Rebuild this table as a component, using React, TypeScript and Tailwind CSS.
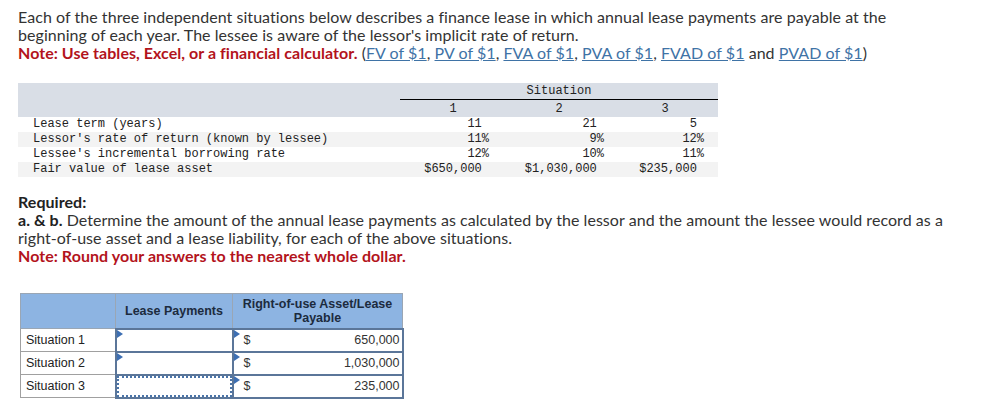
import React from 'react';

const rows = [
  { label: 'Lease term (years)', vals: ['11', '21', '5'], pct: false },
  { label: "Lessor's rate of return (known by lessee)", vals: ['11', '9', '12'], pct: true },
  { label: "Lessee's incremental borrowing rate", vals: ['12', '10', '11'], pct: true },
  { label: 'Fair value of lease asset', vals: ['$650,000', '$1,030,000', '$235,000'], pct: false },
];

const colPad = ['pr-[17px]', 'pr-[8px]', 'pr-[14px]'];

const links = ['FV of $1', 'PV of $1', 'FVA of $1', 'PVA of $1'];

const Flag = () => (
  <span className="absolute left-0 top-0 w-0 h-0 border-y-[4px] border-y-transparent border-l-[6px] border-l-[#3d6fb3]"></span>
);

const answers = [
  { name: 'Situation 1', value: '650,000' },
  { name: 'Situation 2', value: '1,030,000' },
  { name: 'Situation 3', value: '235,000' },
];

const App = () => {
  return (
    <div className="w-[989px] h-[411px] bg-white pl-[18px] pt-[8px] text-[#333] font-['Lato',sans-serif] text-[16px] leading-[18px] tracking-[0.05px]">
      {/* Intro */}
      <p className="whitespace-nowrap">
        Each of the three independent situations below describes a finance lease in which annual lease payments are payable at the
        <br />
        beginning of each year. The lessee is aware of the lessor's implicit rate of return.
        <br />
        <span className="font-bold text-[#b3131c]">Note: Use tables, Excel, or a financial calculator.</span>{' '}
        <span>(</span>
        {links.map((l) => (
          <React.Fragment key={l}>
            <a className="text-[#3f73a6] underline">{l}</a>
            <span>, </span>
          </React.Fragment>
        ))}
        <a className="text-[#3f73a6] underline">FVAD of $1</a>
        <span> and </span>
        <a className="text-[#3f73a6] underline">PVAD of $1</a>
        <span>)</span>
      </p>

      {/* Data table */}
      <table className="mt-[21px] w-[700px] border-collapse table-fixed font-['Liberation_Mono',monospace] text-[12px] leading-[15px] tracking-normal text-[#222]">
        <colgroup>
          <col className="w-[382px]" />
          <col className="w-[106px]" />
          <col className="w-[106px]" />
          <col className="w-[106px]" />
        </colgroup>
        <thead className="bg-[#d9dee6]">
          <tr className="h-[15px]">
            <th rowSpan={2} className="p-0"></th>
            <th colSpan={3} className="p-0 pt-[1px] font-normal text-center border-b border-black">Situation</th>
          </tr>
          <tr className="h-[16px]">
            <th className="p-0 pt-[2px] font-normal text-center">1</th>
            <th className="p-0 pt-[2px] font-normal text-center">2</th>
            <th className="p-0 pt-[2px] font-normal text-center">3</th>
          </tr>
        </thead>
        <tbody>
          {rows.map((r, i) => (
            <tr key={r.label} className={`h-[15px] ${i % 2 === 1 ? 'bg-[#f3f3f3]' : 'bg-white'}`}>
              <td className="p-0 pl-[15px] whitespace-nowrap">{r.label}</td>
              {r.vals.map((v, j) => (
                <td key={j} className={`p-0 text-right ${colPad[j]}`}>
                  {v}
                  {r.pct ? '%' : <span className="invisible">%</span>}
                </td>
              ))}
            </tr>
          ))}
        </tbody>
      </table>

      {/* Required */}
      <div className="mt-[16px]">
        <p className="font-bold text-[#222]">Required:</p>
        <p className="whitespace-nowrap">
          <span className="font-bold text-[#222]">a. &amp; b.</span> Determine the amount of the annual lease payments as calculated by the lessor and the amount the lessee would record as a
          <br />
          right-of-use asset and a lease liability, for each of the above situations.
        </p>
        <p className="font-bold text-[#b3131c]">Note: Round your answers to the nearest whole dollar.</p>
      </div>

      {/* Answer table */}
      <table className="mt-[28px] ml-[2px] border-collapse table-fixed font-['Liberation_Sans',Arial,sans-serif] text-[12.5px] leading-[14px] tracking-normal text-[#222] border border-[#8a8a8a]">
        <colgroup>
          <col className="w-[95px]" />
          <col className="w-[117px]" />
          <col className="w-[170px]" />
        </colgroup>
        <thead>
          <tr className="h-[35px] bg-[#8db4e2] text-[#1c2b3e]">
            <th className="border border-[#9aa6b4]"></th>
            <th className="border border-[#9aa6b4] font-bold">Lease Payments</th>
            <th className="border border-[#9aa6b4] font-bold leading-[14px]">
              Right-of-use Asset/Lease
              <br />
              Payable
            </th>
          </tr>
        </thead>
        <tbody>
          {answers.map((a, i) => (
            <tr key={a.name} className="h-[23px]">
              <td className="border border-[#a0a0a0] pl-[5px] text-left font-normal">{a.name}</td>
              <td className="relative border-2 border-[#5b7699] p-0 bg-white">
                {i === 2 ? (
                  <div className="absolute inset-0 border-2 border-dotted border-[#4a74a8]"></div>
                ) : (
                  <Flag />
                )}
              </td>
              <td className="relative border-2 border-[#5b7699] p-0 bg-white">
                <Flag />
                <div className="flex justify-between pl-[10px] pr-[2px] text-[#333]">
                  <span>$</span>
                  <span>{a.value}</span>
                </div>
              </td>
            </tr>
          ))}
        </tbody>
      </table>
    </div>
  );
};

export default App;
